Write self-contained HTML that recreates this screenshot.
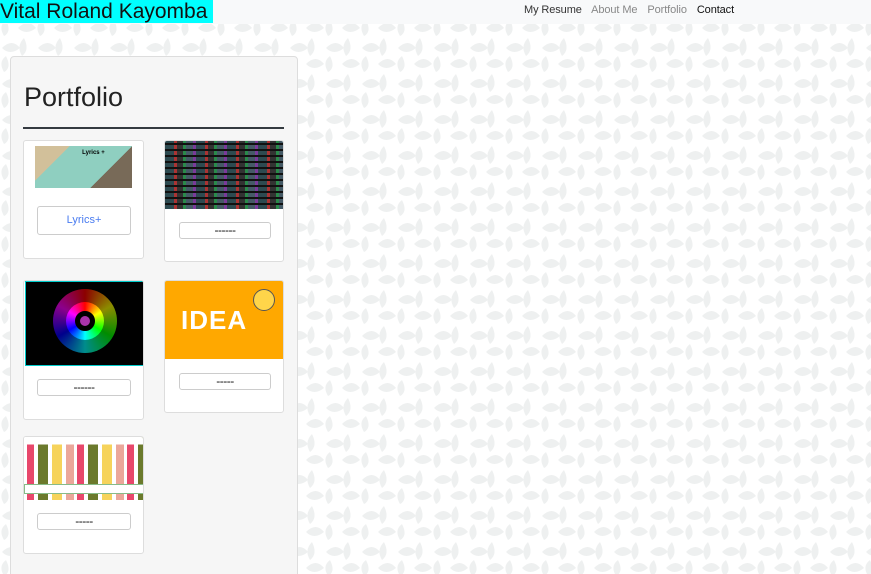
<!DOCTYPE html>
<html><head><meta charset="utf-8"><style>
*{margin:0;padding:0;box-sizing:border-box}
html,body{width:871px;height:574px;overflow:hidden}
body{position:relative;font-family:"Liberation Sans","DejaVu Sans",sans-serif;background:#fff}
#bg{position:absolute;left:0;top:0}
nav{position:absolute;left:0;top:0;width:871px;height:24px;background:#f8f9fa}
.brand{position:absolute;left:0;top:0;height:23px;width:213px;background:#00ffff;font-size:21px;line-height:23px;color:#111;white-space:nowrap}
.links{position:absolute;left:524px;top:4px;font-size:11px;white-space:nowrap;letter-spacing:-0.1px}
.links span{margin-right:7px}
.panel{position:absolute;left:10px;top:56px;width:288px;height:530px;background:#f6f6f6;border:1px solid #ddd;border-radius:4px}
h1{position:absolute;left:24px;top:82px;font-size:27px;font-weight:normal;color:#222}
.hr{position:absolute;left:23px;top:127px;width:261px;height:2px;background:#343a40}
.card{position:absolute;background:#fff;border:1px solid #ddd;border-radius:3px;overflow:hidden}
.btn{position:absolute;background:#fff;border:1px solid #ccc;border-radius:3px;font-size:12px;text-align:center;color:#111;letter-spacing:-0.5px}
.img{position:absolute}
</style></head><body>
<svg id="bg" width="871" height="574"><defs><pattern id="p" width="36" height="36" patternUnits="userSpaceOnUse">
<path d="M2 12 q10 -10 18 0 q-10 8 -18 0z" fill="#eef0f0"/><path d="M24 2 q6 12 -2 18 q-6 -10 2 -18z" fill="#eef0f0"/>
<path d="M18 28 q10 -10 18 0 q-10 8 -18 0z" fill="#eef0f0"/><path d="M6 20 q6 12 -2 16 q-6 -10 2 -16z" fill="#eef0f0"/></pattern></defs>
<rect width="871" height="574" fill="url(#p)"/></svg>
<nav><div class="brand">Vital Roland Kayomba</div>
<div class="links"><span style="color:#333">My Resume</span> <span style="color:#888">About Me</span> <span style="color:#888">Portfolio</span> <span style="color:#111">Contact</span></div></nav>
<div class="panel"></div>
<h1>Portfolio</h1><div class="hr"></div>

<div class="card" style="left:23px;top:140px;width:121px;height:119px">
<div class="img" style="left:11px;top:5px;width:97px;height:42px;background:linear-gradient(135deg,#d2c09a 0 25%,#8fcfc0 25% 70%,#786a58 70%)"><div style="font-size:6px;font-weight:bold;text-align:center;margin-top:4px;margin-left:20px">Lyrics +</div></div>
<div class="btn" style="left:13px;top:65px;width:94px;height:29px;line-height:27px;color:#4a7cf0;font-size:11px;letter-spacing:0">Lyrics+</div></div>

<div class="card" style="left:164px;top:140px;width:120px;height:122px">
<div class="img" style="left:0;top:0;width:120px;height:68px;background:repeating-linear-gradient(0deg,transparent 0 4px,#111 4px 6px),repeating-linear-gradient(90deg,#2d4a50 0 9px,#a33 9px 12px,#333 12px 18px,#2a8a4a 18px 21px,#455a66 21px 28px,#7a3a9a 28px 31px)"></div>
<div class="btn" style="left:14px;top:81px;width:92px;height:17px;line-height:15px">------</div></div>

<div class="card" style="left:23px;top:280px;width:121px;height:140px">
<div class="img" style="left:1px;top:0;width:119px;height:85px;background:#000;border:1px solid #0cc"><div style="position:absolute;left:27px;top:7px;width:64px;height:64px;border-radius:50%;background:conic-gradient(red,yellow,lime,cyan,blue,magenta,red);opacity:.55"></div><div style="position:absolute;left:40px;top:20px;width:38px;height:38px;border-radius:50%;background:conic-gradient(red,yellow,lime,cyan,blue,magenta,red)"></div><div style="position:absolute;left:49px;top:29px;width:20px;height:20px;border-radius:50%;border:5px solid #000;background:#a3a"></div></div>
<div class="btn" style="left:13px;top:98px;width:94px;height:17px;line-height:15px">------</div></div>

<div class="card" style="left:164px;top:280px;width:120px;height:133px">
<div class="img" style="left:0;top:0;width:120px;height:78px;background:#ffa800"><div style="position:absolute;left:16px;top:24px;font-size:26px;font-weight:bold;color:#fff;letter-spacing:1px">IDEA</div><div style="position:absolute;left:88px;top:8px;width:22px;height:22px;border-radius:50%;background:#ffd54a;border:1px solid #555"></div></div>
<div class="btn" style="left:14px;top:92px;width:92px;height:17px;line-height:15px">-----</div></div>

<div class="card" style="left:23px;top:436px;width:121px;height:118px">
<div class="img" style="left:0;top:0;width:121px;height:63px;background:linear-gradient(#fff 0 12%,transparent 12%),repeating-linear-gradient(90deg,#fff 0 3px,#e8476b 3px 10px,#fff 10px 14px,#6b7a2c 14px 24px,#fff 24px 28px,#f6d35b 28px 38px,#fff 38px 42px,#eba79a 42px 50px)"><div style="position:absolute;left:0;top:47px;width:121px;height:10px;background:#fff;border:1px solid #8b8"></div></div>
<div class="btn" style="left:13px;top:76px;width:94px;height:17px;line-height:15px">-----</div></div>
</body></html>
